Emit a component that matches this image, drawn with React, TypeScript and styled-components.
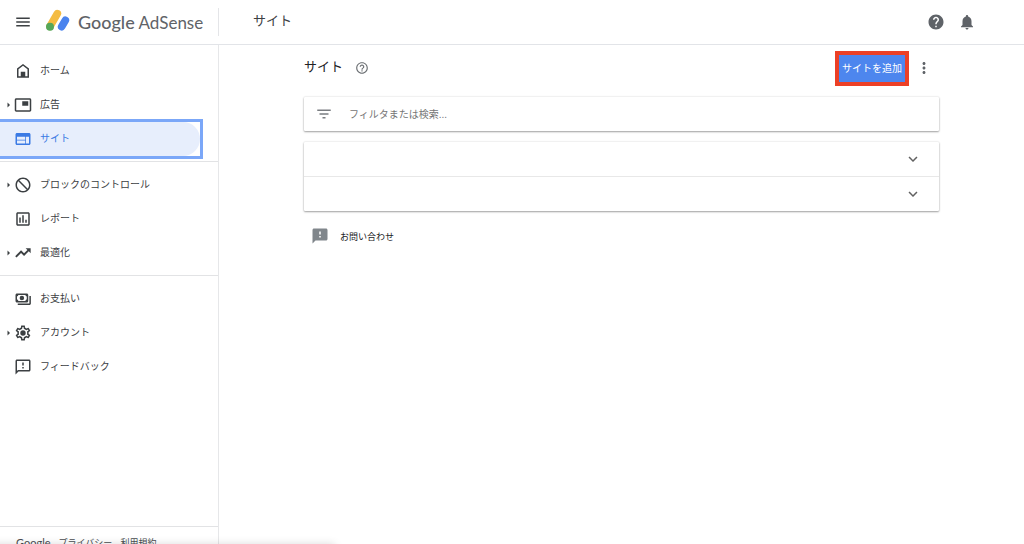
import React from "react";
import styled, { createGlobalStyle } from "styled-components";

const GlobalStyle = createGlobalStyle`
  *, *::before, *::after { box-sizing: border-box; }
  body {
    margin: 0;
    background: #fff;
    color: #3c4043;
    font-family: "Liberation Sans", "Noto Sans CJK JP", sans-serif;
    font-size: 10px;
  }
  button, input { font: inherit; }
`;

const paths = {
  menu: "M3 18h18v-2H3v2zm0-5h18v-2H3v2zm0-7v2h18V6H3z",
  help: "M12 2C6.48 2 2 6.48 2 12s4.48 10 10 10 10-4.48 10-10S17.52 2 12 2zm1 17h-2v-2h2v2zm2.07-7.75l-.9.92C13.45 12.9 13 13.5 13 15h-2v-.5c0-1.1.45-2.1 1.17-2.83l1.24-1.26c.37-.36.59-.86.59-1.41 0-1.1-.9-2-2-2s-2 .9-2 2H8c0-2.21 1.79-4 4-4s4 1.79 4 4c0 .88-.36 1.68-.93 2.25z",
  helpOutline:
    "M11 18h2v-2h-2v2zm1-16C6.48 2 2 6.48 2 12s4.48 10 10 10 10-4.48 10-10S17.52 2 12 2zm0 18c-4.41 0-8-3.59-8-8s3.59-8 8-8 8 3.59 8 8-3.59 8-8 8zm0-14c-2.21 0-4 1.79-4 4h2c0-1.1.9-2 2-2s2 .9 2 2c0 2-3 1.75-3 5h2c0-2.25 3-2.5 3-5 0-2.21-1.79-4-4-4z",
  bell: "M12 22c1.1 0 2-.9 2-2h-4c0 1.1.89 2 2 2zm6-6v-5c0-3.07-1.64-5.64-4.5-6.32V4c0-.83-.67-1.5-1.5-1.5s-1.5.67-1.5 1.5v.68C7.63 5.36 6 7.92 6 11v5l-2 2v1h16v-1l-2-2z",
  home: "M12 2.5L4 8.8V21h16V8.8L12 2.5zM18 19h-3v-6H9v6H6V9.8l6-4.75 6 4.75V19z",
  ads: "M19 7h-8v6h8V7zm2-4H3c-1.1 0-2 .9-2 2v14c0 1.1.9 1.98 2 1.98h18c1.1 0 2-.88 2-1.98V5c0-1.1-.9-2-2-2zm0 16.01H3V4.98h18v14.03z",
  site: "M20 4H4c-1.1 0-1.99.9-1.99 2L2 18c0 1.1.9 2 2 2h16c1.1 0 2-.9 2-2V6c0-1.1-.9-2-2-2zm-5 14H4v-4h11v4zm0-5H4V9h11v4zm5 5h-4V9h4v9z",
  block:
    "M12 2C6.48 2 2 6.48 2 12s4.48 10 10 10 10-4.48 10-10S17.52 2 12 2zm0 18c-4.42 0-8-3.58-8-8 0-1.85.63-3.55 1.69-4.9L16.9 18.31C15.55 19.37 13.85 20 12 20zm6.31-3.1L7.1 5.69C8.45 4.63 10.15 4 12 4c4.42 0 8 3.58 8 8 0 1.85-.63 3.55-1.69 4.9z",
  report:
    "M9 17H7v-7h2v7zm4 0h-2V7h2v10zm4 0h-2v-4h2v4zm2 2H5V5h14v14zm0-16H5c-1.1 0-2 .9-2 2v14c0 1.1.9 2 2 2h14c1.1 0 2-.9 2-2V5c0-1.1-.9-2-2-2z",
  trend: "M15.500 5.500l2.400 2.400-4.490 4.500-4-4L1.600 16.200l1.800 1.800 6-6 4 4 6.300-6.290L22.200 12.200V5.500z",
  payments:
    "M17 4.5H4c-1.1 0-2 .9-2 2v8c0 1.1.9 2 2 2h13c1.1 0 2-.9 2-2v-8c0-1.1-.9-2-2-2zm0 8.3c-.9 0-1.7.8-1.7 1.7H5.7c0-.9-.8-1.7-1.7-1.7V8.2c.9 0 1.7-.8 1.7-1.7h9.6c0 .9.8 1.7 1.7 1.7v4.6zM10.5 7.5a3 3 0 1 0 0 6 3 3 0 0 0 0-6zM22.5 8v10c0 1.1-.9 2-2 2H5v-2h15.5V8h2z",
  feedback:
    "M20 2H4c-1.1 0-1.99.9-1.99 2L2 22l4-4h14c1.1 0 2-.9 2-2V4c0-1.1-.9-2-2-2zm0 14H5.17L4 17.17V4h16v12zM11 12h2v2h-2zm0-6h2v4h-2z",
  feedbackFill:
    "M20 2H4c-1.1 0-1.99.9-1.99 2L2 22l4-4h14c1.1 0 2-.9 2-2V4c0-1.1-.9-2-2-2zm-7 12h-2v-2h2v2zm0-4h-2V6h2v4z",
  gear: "M19.43 12.98c.04-.32.07-.64.07-.98s-.03-.66-.07-.98l2.11-1.65c.19-.15.24-.42.12-.64l-2-3.46c-.12-.22-.39-.3-.61-.22l-2.49 1c-.52-.4-1.08-.73-1.69-.98l-.38-2.65C14.46 2.18 14.25 2 14 2h-4c-.25 0-.46.18-.49.42l-.38 2.65c-.61.25-1.17.59-1.69.98l-2.49-1c-.23-.09-.49 0-.61.22l-2 3.46c-.13.22-.07.49.12.64l2.11 1.65c-.04.32-.07.65-.07.98s.03.66.07.98l-2.11 1.65c-.19.15-.24.42-.12.64l2 3.46c.12.22.39.3.61.22l2.49-1c.52.4 1.08.73 1.69.98l.38 2.65c.03.24.24.42.49.42h4c.25 0 .46-.18.49-.42l.38-2.65c.61-.25 1.17-.59 1.69-.98l2.49 1c.23.09.49 0 .61-.22l2-3.46c.12-.22.07-.49-.12-.64l-2.11-1.65zm-1.98-1.71c.04.31.05.52.05.73 0 .21-.02.43-.05.73l-.14 1.13.89.7 1.08.84-.7 1.21-1.27-.51-1.04-.42-.9.68c-.43.32-.84.56-1.25.73l-1.06.43-.16 1.13-.2 1.35h-1.4l-.19-1.35-.16-1.13-1.06-.43c-.43-.18-.83-.41-1.23-.71l-.91-.7-1.06.43-1.27.51-.7-1.21 1.08-.84.89-.7-.14-1.13c-.03-.31-.05-.54-.05-.74s.02-.43.05-.73l.14-1.13-.89-.7-1.08-.84.7-1.21 1.27.51 1.04.42.9-.68c.43-.32.84-.56 1.25-.73l1.06-.43.16-1.13.2-1.35h1.39l.19 1.35.16 1.13 1.06.43c.43.18.83.41 1.23.71l.91.7 1.06-.43 1.27-.51.7 1.21-1.07.85-.89.7.14 1.13zM12 8.4a3.600 3.600 0 1 0 0 7.200 3.600 3.600 0 0 0 0-7.200z",
  filter: "M10 18h4v-2h-4v2zM3 6v2h18V6H3zm3 7h12v-2H6v2z",
  more: "M12 8c1.1 0 2-.9 2-2s-.9-2-2-2-2 .9-2 2 .9 2 2 2zm0 2c-1.1 0-2 .9-2 2s.9 2 2 2 2-.9 2-2-.9-2-2-2zm0 6c-1.1 0-2 .9-2 2s.9 2 2 2 2-.9 2-2-.9-2-2-2z",
  expand: "M16.59 8.59L12 13.17 7.41 8.59 6 10l6 6 6-6z",
};
type IconName = keyof typeof paths;

const Svg = styled.svg`
  display: block;
  flex: none;
  fill: currentColor;
`;

function Icon({ name, size = 18 }: { name: IconName; size?: number }) {
  return (
    <Svg width={size} height={size} viewBox="0 0 24 24" aria-hidden="true">
      <path fillRule="evenodd" d={paths[name]} />
    </Svg>
  );
}

const Shell = styled.div`
  display: flex;
  flex-direction: column;
  height: 100vh;
  overflow: hidden;
`;

const Header = styled.header`
  display: flex;
  align-items: center;
  flex: none;
  height: 45px;
  padding: 0 48px 0 14px;
  border-bottom: 1px solid #e2e4e8;
`;

const IconButton = styled.button<{ $color?: string }>`
  display: flex;
  align-items: center;
  justify-content: center;
  flex: none;
  padding: 0;
  border: 0;
  background: none;
  color: ${(p) => p.$color ?? "#5f6368"};
  cursor: pointer;
`;

const Brand = styled.a`
  display: flex;
  align-items: center;
  gap: 8px;
  width: 172px;
  margin-left: 14px;
  color: #5f6368;
  text-decoration: none;
  white-space: nowrap;
`;

const Wordmark = styled.span`
  font-family: Lato, sans-serif;
  font-size: 17px;
  font-weight: 400;
  line-height: 24px;

  b {
    font-size: 18px;
    font-weight: 500;
  }
`;

const PageName = styled.div`
  flex: 1;
  height: 28px;
  padding-left: 34px;
  border-left: 1px solid #e4e5e8;
  font-size: 13px;
  line-height: 26px;
  color: #3c4043;
`;

const HeaderTools = styled.div`
  display: flex;
  gap: 13px;
`;

const Body = styled.div`
  display: flex;
  flex: 1;
  min-height: 0;
`;

const Sidebar = styled.aside`
  display: flex;
  flex-direction: column;
  flex: none;
  width: 219px;
  border-right: 1px solid #e6e7e9;
`;

const Nav = styled.nav`
  flex: 1;
  min-height: 0;
  padding-top: 3px;
`;

const NavGroup = styled.ul`
  margin: 0;
  padding: 6px 0 5px;
  list-style: none;

  & + & { border-top: 1px solid #e2e3e5; }
`;

const NavLink = styled.a<{ $active?: boolean }>`
  display: block;
  width: 200px;
  color: ${(p) => (p.$active ? "#3b7ae4" : "#3c4043")};
  text-decoration: none;
  outline: ${(p) => (p.$active ? "3px solid #7ba7f8" : "none")};
`;

const NavPill = styled.span<{ $active?: boolean }>`
  display: flex;
  align-items: center;
  height: 34px;
  border-radius: 0 17px 17px 0;
  background: ${(p) => (p.$active ? "#e7eefc" : "none")};
`;

const NavArrow = styled.span`
  display: flex;
  justify-content: flex-end;
  width: 14px;
  padding-right: 4px;
`;

const NavText = styled.span`
  padding-left: 8px;
  line-height: 16px;
`;

const Footer = styled.footer`
  display: flex;
  flex: none;
  gap: 8px;
  height: 18px;
  padding: 9px 16px 0;
  border-top: 1px solid #e2e3e5;
  overflow: hidden;
`;

const FooterLink = styled.a`
  color: #4a4d51;
  font-size: 9px;
  line-height: 14px;
  text-decoration: none;
`;

const GoogleLink = styled(FooterLink)`
  font-family: Lato, sans-serif;
  font-size: 11px;
`;

const Main = styled.main`
  flex: 1;
  min-width: 0;
  padding: 5px 85px 0;
`;

const TitleRow = styled.div`
  display: flex;
  align-items: center;
  height: 36px;
`;

const Title = styled.h1`
  margin: 0 12px 0 0;
  padding-bottom: 2px;
  font-size: 13px;
  font-weight: 400;
  line-height: 20px;
  color: #202124;
`;

const TitleActions = styled.div`
  display: flex;
  align-items: center;
  gap: 6px;
  margin-left: auto;
  margin-right: 6px;
`;

const AddButton = styled.button`
  height: 35px;
  padding: 0 3px 1px;
  border: 4px solid #ec4026;
  background: #4d86ee;
  color: #fff;
  white-space: nowrap;
  cursor: pointer;
`;

const Card = styled.section`
  margin-top: 11px;
  background: #fff;
  border-radius: 1px;
  box-shadow: 0 1px 2px rgba(0, 0, 0, 0.34), 0 0 2px rgba(0, 0, 0, 0.16);
`;

const FilterLabel = styled.label`
  display: flex;
  align-items: center;
  gap: 16px;
  height: 34px;
  padding: 0 11px;
  color: #7a7d81;
`;

const FilterInput = styled.input`
  flex: 1;
  min-width: 0;
  padding: 0;
  border: 0;
  outline: 0;
  background: none;
  color: #3c4043;

  &::placeholder { color: #757575; opacity: 1; }
`;

const PanelRow = styled.button`
  display: flex;
  align-items: center;
  justify-content: flex-end;
  width: 100%;
  height: 34px;
  padding: 0 17px;
  border: 0;
  background: none;
  color: #616161;
  cursor: pointer;

  & + & { height: 35px; border-top: 1px solid #e8e8e8; }
`;

const Contact = styled.a`
  display: inline-flex;
  align-items: center;
  gap: 11px;
  margin: 16px 0 0 7px;
  color: #202124;
  font-size: 9px;
  text-decoration: none;

  svg { color: #80868b; }
`;

const StatusShadow = styled.div`
  position: fixed;
  left: -10px;
  bottom: -20px;
  width: 345px;
  height: 20px;
  box-shadow: 0 0 8px rgba(0, 0, 0, 0.14);
  pointer-events: none;
`;

type Item = { label: string; icon: IconName; expandable?: boolean; active?: boolean };

const groups: Item[][] = [
  [
    { label: "ホーム", icon: "home" },
    { label: "広告", icon: "ads", expandable: true },
    { label: "サイト", icon: "site", active: true },
  ],
  [
    { label: "ブロックのコントロール", icon: "block", expandable: true },
    { label: "レポート", icon: "report" },
    { label: "最適化", icon: "trend", expandable: true },
  ],
  [
    { label: "お支払い", icon: "payments" },
    { label: "アカウント", icon: "gear", expandable: true },
    { label: "フィードバック", icon: "feedback" },
  ],
];

function NavItem({ label, icon, expandable, active }: Item) {
  return (
    <li>
      <NavLink href="#" $active={active} aria-current={active ? "page" : undefined}>
        <NavPill $active={active}>
          <NavArrow>
            {expandable && (
              <Svg width="3" height="6" viewBox="0 0 3 6" aria-hidden="true">
                <path d="M.5.500L3 3 .5 5.500z" />
              </Svg>
            )}
          </NavArrow>
          <Icon name={icon} />
          <NavText>{label}</NavText>
        </NavPill>
      </NavLink>
    </li>
  );
}

function AdSenseLogo() {
  return (
    <Svg width="24" height="26" viewBox="138 27 72 78" aria-hidden="true">
      <path d="M172 41L150 79" fill="none" stroke="#f4bc42" strokeWidth="23" strokeLinecap="round" />
      <path d="M196 61L185 80" fill="none" stroke="#4a83ee" strokeWidth="23" strokeLinecap="round" />
      <circle cx="150" cy="80" r="12" fill="#55a75a" />
    </Svg>
  );
}

export default function App() {
  return (
    <Shell lang="ja">
      <GlobalStyle />
      <Header>
        <IconButton aria-label="メニュー" $color="#3c4043">
          <Icon name="menu" />
        </IconButton>
        <Brand href="#">
          <AdSenseLogo />
          <Wordmark>
            <b>Google</b> AdSense
          </Wordmark>
        </Brand>
        <PageName>サイト</PageName>
        <HeaderTools>
          <IconButton aria-label="ヘルプ">
            <Icon name="help" />
          </IconButton>
          <IconButton aria-label="通知">
            <Icon name="bell" />
          </IconButton>
        </HeaderTools>
      </Header>
      <Body>
        <Sidebar>
          <Nav>
            {groups.map((items, i) => (
              <NavGroup key={i}>
                {items.map((item) => (
                  <NavItem key={item.label} {...item} />
                ))}
              </NavGroup>
            ))}
          </Nav>
          <Footer>
            <GoogleLink href="#">Google</GoogleLink>
            <FooterLink href="#">プライバシー</FooterLink>
            <FooterLink href="#">利用規約</FooterLink>
          </Footer>
        </Sidebar>
        <Main>
          <TitleRow>
            <Title>サイト</Title>
            <IconButton aria-label="サイトのヘルプ" $color="#6b6f73">
              <Icon name="helpOutline" size={14} />
            </IconButton>
            <TitleActions>
              <AddButton>サイトを追加</AddButton>
              <IconButton aria-label="その他">
                <Icon name="more" />
              </IconButton>
            </TitleActions>
          </TitleRow>
          <Card>
            <FilterLabel>
              <Icon name="filter" />
              <FilterInput type="text" aria-label="フィルタ" placeholder="フィルタまたは検索..." />
            </FilterLabel>
          </Card>
          <Card>
            <PanelRow aria-label="パネル 1 を開く">
              <Icon name="expand" />
            </PanelRow>
            <PanelRow aria-label="パネル 2 を開く">
              <Icon name="expand" />
            </PanelRow>
          </Card>
          <Contact href="#">
            <Icon name="feedbackFill" />
            お問い合わせ
          </Contact>
        </Main>
      </Body>
      <StatusShadow />
    </Shell>
  );
}
